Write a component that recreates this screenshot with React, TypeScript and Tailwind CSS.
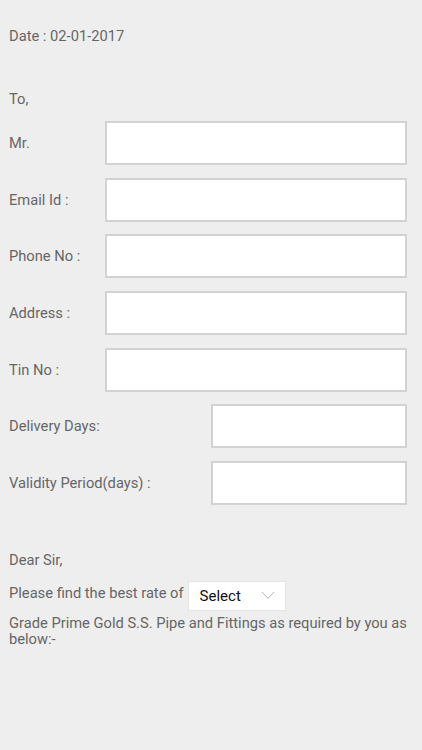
import React from 'react';

const rows = [
  { label: 'Mr.', short: false },
  { label: 'Email Id :', short: false },
  { label: 'Phone No :', short: false },
  { label: 'Address :', short: false },
  { label: 'Tin No :', short: false },
  { label: 'Delivery Days:', short: true },
  { label: 'Validity Period(days) :', short: true },
];

export default function App() {
  return (
    <div
      className="min-h-[750px] w-full bg-[#eeeeee] text-[14.7px] text-[#666666] px-[9px] pt-[27px]"
      style={{ fontFamily: 'Roboto, "Noto Sans", sans-serif' }}
    >
      <p className="leading-[18px]">Date : 02-01-2017</p>
      <p className="leading-[18px] mt-[45px]">To,</p>

      {/* Form fields */}
      <div className="flex flex-col gap-[12.67px] mt-[13px] pr-[6px]">
        {rows.map((r) => (
          <div key={r.label} className="flex items-center justify-between h-[44px]">
            <span>{r.label}</span>
            <input
              type="text"
              className={
                r.short
                  ? 'w-[196px] h-[44px] bg-white border-2 border-[#d2d2d2] outline-none'
                  : 'w-[302px] h-[44px] bg-white border-2 border-[#d2d2d2] outline-none'
              }
            />
          </div>
        ))}
      </div>

      <p className="leading-[18px] mt-[46px]">Dear Sir,</p>
      <div className="flex items-start mt-[12px]">
        <span className="leading-[18px] mt-[3px]">Please find the best rate of</span>
        <div className="ml-[4px] w-[98px] h-[30px] bg-white border border-[#e4e4e4] flex items-center justify-between pl-[11px] pr-[10px]">
          <span className="text-[15px] text-[#111111]">Select</span>
          <svg width="14" height="9" viewBox="0 0 14 9" fill="none">
            <path d="M1 1l6 6.5L13 1" stroke="#b8b8b8" strokeWidth="1" />
          </svg>
        </div>
      </div>
      <p className="leading-[16px] mt-[4px] pr-[6px]">
        Grade Prime Gold S.S. Pipe and Fittings as required by you as below:-
      </p>
    </div>
  );
}
